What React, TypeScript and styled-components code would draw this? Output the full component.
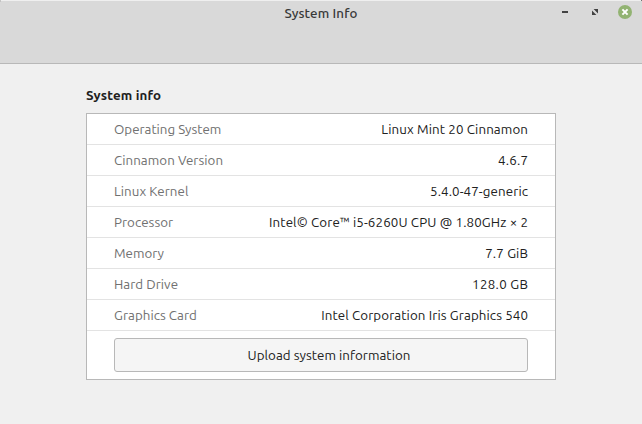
import React from 'react';
import styled, { createGlobalStyle } from 'styled-components';

const GlobalStyle = createGlobalStyle`
  * { box-sizing: border-box; }
  html, body { margin: 0; background: #f0f0f0; }
  body {
    font-family: Ubuntu, "Noto Sans", sans-serif;
    font-size: 13.333px;
    color: #202020;
    overflow: hidden;
  }
`;

const Window = styled.div`
  width: 642px;
  height: 424px;
  display: flex;
  flex-direction: column;
  background: #f0f0f0;
`;

const Header = styled.header`
  height: 64px;
  flex: none;
  background:
    linear-gradient(#707070, #707070) 100% 0 / 1px 1px no-repeat border-box,
    linear-gradient(#c4c4c4, #c4c4c4) 0 0 / 1px 2px no-repeat border-box,
    linear-gradient(#efefef, #efefef) 0 0 / 100% 1px no-repeat border-box,
    #d9d9d9;
  border-bottom: 1px solid #b8b8b8;
  padding-top: 1px;
`;

const TitleBar = styled.div`
  height: 24px;
  display: grid;
  grid-template-columns: 1fr auto 1fr;
  align-items: start;
`;

const Title = styled.h1<{ $tracking: number }>`
  grid-column: 2;
  margin: 0;
  font-size: 13.333px;
  line-height: 26px;
  font-weight: 500;
  color: #383838;
  white-space: nowrap;
  letter-spacing: ${(p) => p.$tracking}px;
`;

const Controls = styled.div`
  height: 24px;
  justify-self: end;
  display: flex;
  align-items: center;
  padding: 0 9px 2px 0;
  gap: 14px;
`;

const ControlButton = styled.button`
  width: 16px;
  height: 16px;
  padding: 0;
  border: 0;
  background: none;
  display: flex;
`;

const Content = styled.main`
  width: 470px;
  margin: 20px 0 0 86px;
`;

const Heading = styled.h2<{ $tracking: number }>`
  margin: 0;
  height: 29px;
  font-size: 13.333px;
  line-height: 24px;
  font-weight: 700;
  letter-spacing: ${(p) => p.$tracking}px;
`;

const Card = styled.section`
  height: 267px;
  border: 1px solid #b8b8b8;
  background: #fff;
`;

const Row = styled.div`
  height: 31px;
  padding: 0 27px;
  display: flex;
  justify-content: space-between;
  border-bottom: 1px solid #e3e3e3;
  line-height: 32px;
  white-space: nowrap;
`;

const Label = styled.span<{ $tracking: number }>`
  color: #707070;
  letter-spacing: ${(p) => p.$tracking}px;
`;

const Value = styled.span<{ $tracking: number }>`
  letter-spacing: ${(p) => p.$tracking}px;
  margin-right: ${(p) => -p.$tracking}px;
`;

const UploadButton = styled.button<{ $tracking: number }>`
  display: block;
  width: 414px;
  height: 34px;
  margin: 7px 27px;
  padding: 2px 0 0 16px;
  border: 1px solid #b8b8b8;
  border-radius: 3px;
  background: #f5f5f5;
  color: #202020;
  font: inherit;
  line-height: 30px;
  letter-spacing: ${(p) => p.$tracking}px;
`;

interface Item {
  label: string;
  labelTracking: number;
  value: string;
  valueTracking: number;
}

const items: Item[] = [
  { label: 'Operating System', labelTracking: 0, value: 'Linux Mint 20 Cinnamon', valueTracking: 0.12 },
  { label: 'Cinnamon Version', labelTracking: 0.05, value: '4.6.7', valueTracking: 0.2 },
  { label: 'Linux Kernel', labelTracking: 0.05, value: '5.4.0-47-generic', valueTracking: 0.11 },
  { label: 'Processor', labelTracking: 0.05, value: 'Intel© Core™ i5-6260U CPU @ 1.80GHz × 2', valueTracking: 0.125 },
  { label: 'Memory', labelTracking: 0, value: '7.7 GiB', valueTracking: 0.15 },
  { label: 'Hard Drive', labelTracking: 0.05, value: '128.0 GB', valueTracking: 0.32 },
  { label: 'Graphics Card', labelTracking: 0.05, value: 'Intel Corporation Iris Graphics 540', valueTracking: 0.11 },
];

const MinimizeIcon = () => (
  <svg width="16" height="16" viewBox="0 0 16 16">
    <rect x="5" y="7" width="6" height="2" fill="#424242" />
  </svg>
);

const MaximizeIcon = () => (
  <svg width="16" height="16" viewBox="0 0 16 16" fill="#424242">
    <path d="M6.6 5H11v4.4zM5 6.6V11h4.4z" />
  </svg>
);

const CloseIcon = () => (
  <svg width="16" height="16" viewBox="0 0 16 16">
    <circle cx="8" cy="8" r="7" fill="#92b372" />
    <path d="M5.4 5.4l5.2 5.2M10.6 5.4l-5.2 5.2" stroke="#fff" strokeWidth="2" />
  </svg>
);

export default function App() {
  return (
    <Window>
      <GlobalStyle />
      <Header>
        <TitleBar>
          <Title $tracking={0.12}>System Info</Title>
          <Controls>
            <ControlButton aria-label="Minimize"><MinimizeIcon /></ControlButton>
            <ControlButton aria-label="Maximize"><MaximizeIcon /></ControlButton>
            <ControlButton aria-label="Close"><CloseIcon /></ControlButton>
          </Controls>
        </TitleBar>
      </Header>
      <Content>
        <Heading $tracking={0.16}>System info</Heading>
        <Card>
          {items.map((item) => (
            <Row key={item.label}>
              <Label $tracking={item.labelTracking}>{item.label}</Label>
              <Value $tracking={item.valueTracking}>{item.value}</Value>
            </Row>
          ))}
          <UploadButton $tracking={0.03}>Upload system information</UploadButton>
        </Card>
      </Content>
    </Window>
  );
}
